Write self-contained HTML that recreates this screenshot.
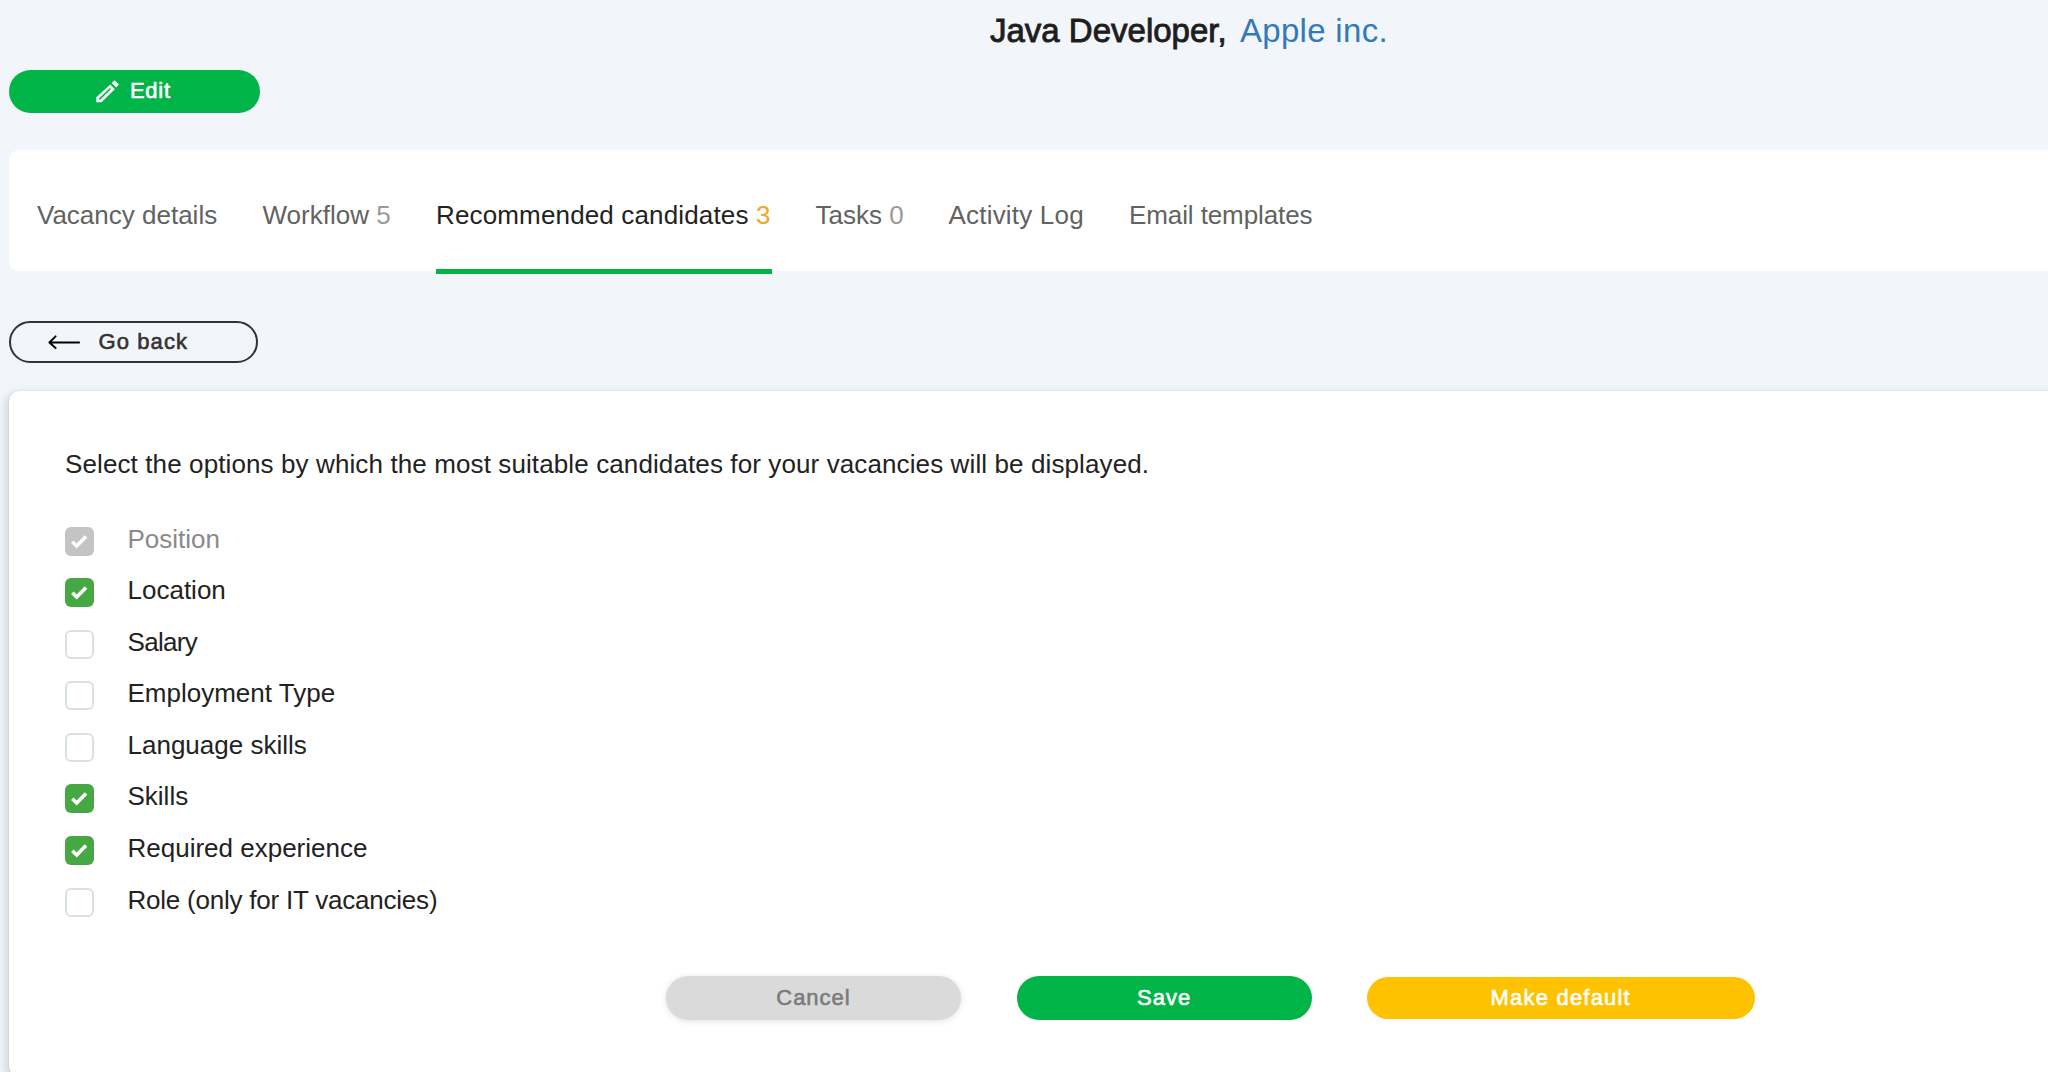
<!DOCTYPE html>
<html>
<head>
<meta charset="utf-8">
<style>
html,body{margin:0;padding:0;}
body{width:2048px;height:1072px;overflow:hidden;background:#f2f6fa;font-family:"Liberation Sans",sans-serif;position:relative;color:#222;}
.abs{position:absolute;white-space:nowrap;}
.title{left:990px;top:14px;font-size:33px;line-height:33px;color:#1e1e1e;-webkit-text-stroke:0.9px #1e1e1e;}
.title .co{position:absolute;left:250px;top:0;color:#337ab7;-webkit-text-stroke:0;letter-spacing:0.3px;}
.edit{left:9px;top:69.5px;width:251px;height:43.5px;border-radius:22px;background:#00b447;}
.edit .lbl{position:absolute;left:121px;top:10px;font-size:22px;line-height:22px;font-weight:normal;color:#fff;-webkit-text-stroke:0.6px #fff;letter-spacing:0.7px;}
.edit svg{position:absolute;left:83px;top:6.5px;}
.tabs{left:9px;top:150px;width:2060px;height:121px;background:#fff;border-radius:10px;}
.tab{position:absolute;top:0;font-size:26px;line-height:26px;color:#626262;}
.tab .n{color:#999;}
.tab.act{color:#222;}
.tab.act .n{color:#f5a623;}
.uline{left:436px;top:269px;width:335.5px;height:5px;background:#00b447;}
.back{left:9px;top:321px;width:244.5px;height:38px;border:2px solid #333;border-radius:22px;}
.back .lbl{position:absolute;left:87.5px;top:8px;font-size:22px;line-height:22px;font-weight:normal;color:#333;letter-spacing:1.1px;-webkit-text-stroke:0.6px #333;}
.back svg{position:absolute;left:36px;top:11px;}
.card{left:9px;top:391px;width:2060px;height:685px;background:#fff;border-radius:10px;box-shadow:-3px 3px 10px rgba(0,0,0,0.15),0 0 1.5px rgba(0,0,0,0.14);}
.desc{left:65px;top:451px;font-size:26px;line-height:26px;color:#222;letter-spacing:0.11px;}
.row{position:absolute;left:65px;height:29px;}
.cb{position:absolute;left:0;top:0;width:29px;height:29px;border-radius:6px;box-sizing:border-box;}
.cb.on{background:#46a843;}
.cb.dis{background:#c4c4c4;}
.cb.off{border:2px solid #d8e1e8;background:#fff;}
.cb svg{position:absolute;left:0;top:0;}
.row .t{position:absolute;white-space:nowrap;left:62.5px;top:-1px;font-size:26px;line-height:26px;color:#222;}
.row.dis .t{color:#8a8a8a;}
.btn{top:976px;height:43.7px;border-radius:22px;text-align:center;font-size:22px;line-height:43.7px;font-weight:normal;color:#fff;letter-spacing:1px;-webkit-text-stroke:0.6px #fff;}
.cancel{left:666px;width:295px;background:#dadada;color:#7b7b7b;-webkit-text-stroke:0.6px #7b7b7b;box-shadow:0 1px 6px rgba(0,0,0,0.12);}
.save{left:1016.5px;width:295.3px;background:#00b447;}
.mk{left:1367px;top:977px;height:42px;line-height:42px;width:387.5px;background:#ffc200;letter-spacing:1.2px;}
</style>
</head>
<body>
<div class="abs title">Java Developer,<span class="co">Apple inc.</span></div>

<div class="abs edit">
<svg width="30" height="30" viewBox="0 0 30 30"><path fill="#fff" fill-rule="evenodd" d="M4.3 26.2 L4.3 21.3 L18.3 8.4 L22.8 13.2 L9.5 26.2 Z M6.73 22.83 L17.93 11.93 L19.07 13.07 L7.87 23.97 Z"/><path fill="#fff" d="M19.7 7.1 L22.5 4.2 L26.9 8.4 L24.2 11.5 Z"/></svg>
<span class="lbl">Edit</span>
</div>

<div class="abs tabs">
<div class="tab" style="left:28px;top:51.5px;">Vacancy details</div>
<div class="tab" style="left:253.5px;top:51.5px;">Workflow <span class="n">5</span></div>
<div class="tab act" style="left:427px;top:51.5px;letter-spacing:0.15px;">Recommended candidates <span class="n">3</span></div>
<div class="tab" style="left:806.5px;top:51.5px;">Tasks <span class="n">0</span></div>
<div class="tab" style="left:939.5px;top:51.5px;letter-spacing:0.2px;">Activity Log</div>
<div class="tab" style="left:1120px;top:51.5px;letter-spacing:-0.1px;">Email templates</div>
</div>
<div class="abs uline"></div>

<div class="abs back">
<svg width="36" height="18" viewBox="0 0 36 18"><path d="M2.4 8.55 H32.1 M8.6 2.4 L2.4 8.55 L8.6 14.1" fill="none" stroke="#000" stroke-width="2.0" stroke-linecap="round" stroke-linejoin="round"/></svg>
<span class="lbl">Go back</span>
</div>

<div class="abs card"></div>
<div class="abs desc">Select the options by which the most suitable candidates for your vacancies will be displayed.</div>

<div class="row dis" style="top:527px;"><div class="cb dis"><svg width="29" height="29"><path d="M7.3 14.7 L11.7 19.0 L21.0 9.4" fill="none" stroke="#fff" stroke-width="3.6"/></svg></div><div class="t">Position</div></div>
<div class="row" style="top:578px;"><div class="cb on"><svg width="29" height="29"><path d="M7.3 14.7 L11.7 19.0 L21.0 9.4" fill="none" stroke="#fff" stroke-width="3.6"/></svg></div><div class="t">Location</div></div>
<div class="row" style="top:630px;"><div class="cb off"></div><div class="t" style="letter-spacing:-0.7px;">Salary</div></div>
<div class="row" style="top:681px;"><div class="cb off"></div><div class="t">Employment Type</div></div>
<div class="row" style="top:733px;"><div class="cb off"></div><div class="t">Language skills</div></div>
<div class="row" style="top:784px;"><div class="cb on"><svg width="29" height="29"><path d="M7.3 14.7 L11.7 19.0 L21.0 9.4" fill="none" stroke="#fff" stroke-width="3.6"/></svg></div><div class="t">Skills</div></div>
<div class="row" style="top:836px;"><div class="cb on"><svg width="29" height="29"><path d="M7.3 14.7 L11.7 19.0 L21.0 9.4" fill="none" stroke="#fff" stroke-width="3.6"/></svg></div><div class="t">Required experience</div></div>
<div class="row" style="top:888px;"><div class="cb off"></div><div class="t" style="letter-spacing:-0.22px;">Role (only for IT vacancies)</div></div>

<div class="abs btn cancel">Cancel</div>
<div class="abs btn save">Save</div>
<div class="abs btn mk">Make default</div>
</body>
</html>
